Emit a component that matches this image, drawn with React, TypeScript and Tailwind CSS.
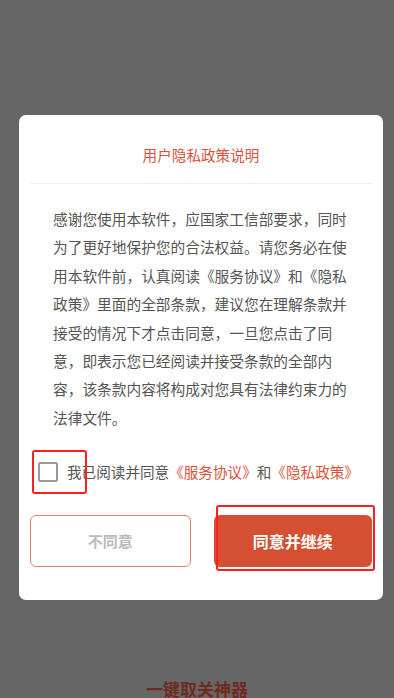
import React from "react";

export default function App() {
  const font = { fontFamily: '"Noto Sans CJK SC", "Noto Sans", sans-serif' };
  return (
    <div className="relative w-full h-[698px] bg-[#666666] overflow-hidden flex flex-col items-stretch" style={font}>
      <div className="mt-[115px] ml-[19px] mr-[11px] bg-white rounded-[7px] px-[11px] pb-[33px] flex flex-col">
        <div className="pt-[28px] pb-[16px] text-center text-[14.6px] leading-[24px] text-[#d9533b]">
          用户隐私政策说明
        </div>
        <div className="h-px bg-[#eeeeee]" />
        <p className="mt-[21px] px-[23px] text-[14.7px] leading-[28.4px] text-[#555555]">
          感谢您使用本软件，应国家工信部要求，同时为了更好地保护您的合法权益。请您务必在使用本软件前，认真阅读《服务协议》和《隐私政策》里面的全部条款，建议您在理解条款并接受的情况下才点击同意，一旦您点击了同意，即表示您已经阅读并接受条款的全部内容，该条款内容将构成对您具有法律约束力的法律文件。
        </p>
        <div className="mt-[28px] h-[24px] flex items-center pl-[8px]">
          <div className="w-[20px] h-[20px] border-2 border-[#9a9a9a] rounded-[2px] shrink-0" />
          <span className="ml-[9px] text-[14.6px] leading-[24px] text-[#555555] whitespace-nowrap">
            我已阅读并同意<span className="text-[#d9533b]">《服务协议》</span>和<span className="text-[#d9533b]">《隐私政策》</span>
          </span>
        </div>
        <div className="mt-[31px] flex gap-[23px]">
          <button className="flex-1 h-[52px] rounded-[6px] border border-[#e2806a] bg-white text-[#bbbbbb] text-[15px] font-bold">
            不同意
          </button>
          <button className="flex-1 h-[52px] rounded-[6px] bg-[#d55032] text-white text-[16px] font-bold">
            同意并继续
          </button>
        </div>
      </div>
      <div className="mt-[80px] text-center text-[17px] leading-[18px] font-bold text-[#6e2a1f]">
        一键取关神器
      </div>
      <div className="absolute left-[32px] top-[450px] w-[55px] h-[44px] border-2 border-[#ff1f1f] rounded-[3px]" />
      <div className="absolute left-[216px] top-[505px] w-[159px] h-[66px] border-2 border-[#ff1f1f] rounded-[3px]" />
    </div>
  );
}
